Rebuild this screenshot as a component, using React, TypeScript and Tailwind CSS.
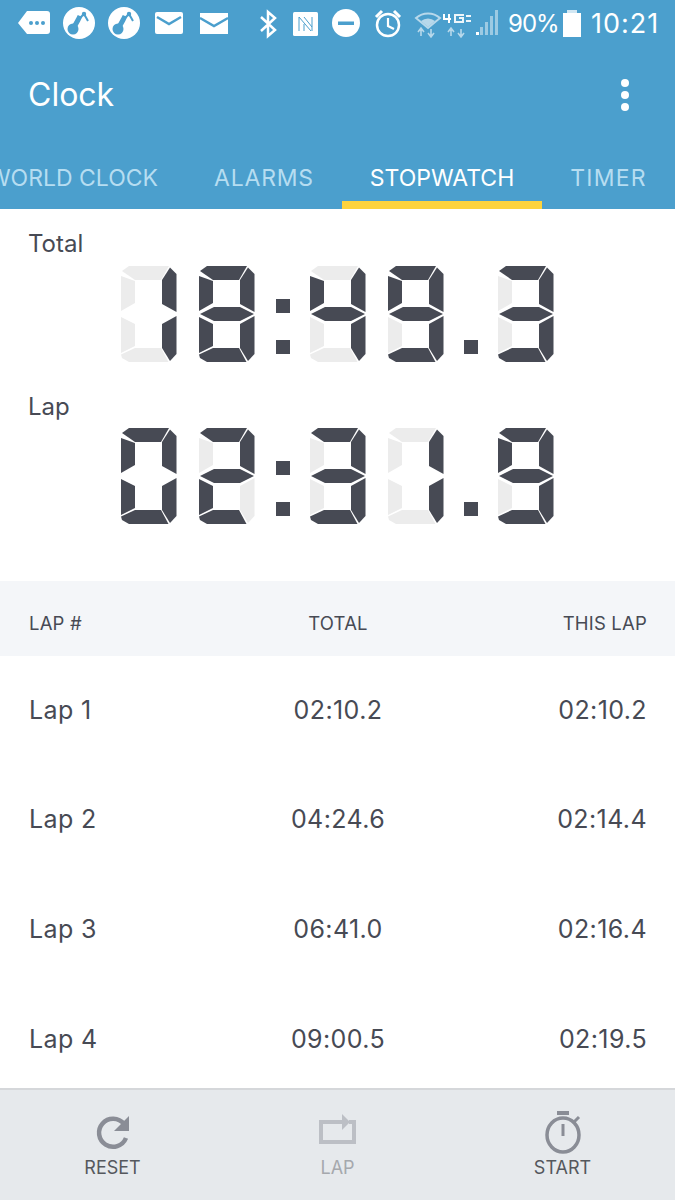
const SEGS: Record<string, string> = {
  a: "1,5 8,0 48,0 40,14 14,14",
  b: "49,1.5 55.5,8 55.5,46 41,38 41,14",
  c: "55.5,50 41,58 41,82 49,95 55.5,88",
  d: "0,88.5 14,82 40,82 47.5,96 8,96 1,92",
  e: "0,51 14,58 14,80 0,87",
  f: "0,10 14,15 14,37 0,45",
  g: "1,48 15,41 41,41 55,48 41,55 15,55",
};
const ON: Record<string, string> = {
  "0": "abcdef", "1": "bc", "2": "abdeg", "3": "abcdg", "4": "bcfg", "8": "abcdefg", "9": "abcdfg",
};

function Digit({ d }: { d: string }) {
  const on = ON[d];
  const hasMid = d !== "0" && d !== "1";
  return (
    <svg width="58" height="98" viewBox="-1 -1 58 98" className="shrink-0">
      {Object.keys(SEGS).map((k) => {
        if (k === "g" && !hasMid) return null;
        return <polygon key={k} points={SEGS[k]} fill={on.includes(k) ? "#474a54" : "#ececec"} />;
      })}
    </svg>
  );
}

function Readout({ v }: { v: string[] }) {
  return (
    <div className="flex h-[98px] pl-[120px]">
      <Digit d={v[0]} />
      <div className="w-[20px]" />
      <Digit d={v[1]} />
      <div className="flex w-[53px] flex-col items-center pt-[34px]">
        <div className="h-[14px] w-[14px] bg-[#474a54]" />
        <div className="mt-[27px] h-[14px] w-[14px] bg-[#474a54]" />
      </div>
      <Digit d={v[2]} />
      <div className="w-[20px]" />
      <Digit d={v[3]} />
      <div className="flex w-[52px] flex-col items-center pt-[75px]">
        <div className="h-[14px] w-[14px] bg-[#474a54]" />
      </div>
      <Digit d={v[4]} />
    </div>
  );
}

function Row({ a, b, c }: { a: string; b: string; c: string }) {
  return (
    <div className="grid h-[109.7px] shrink-0 grid-cols-3 items-center pl-[29px] pr-[28px] text-[25px] tracking-[0.4px] text-[#474a54]">
      <div>{a}</div>
      <div className="text-center">{b}</div>
      <div className="text-right">{c}</div>
    </div>
  );
}

function StatusIcons() {
  return (
    <svg width="675" height="47" viewBox="0 0 675 47" className="block">
      <path d="M18 23 L27 11 H47 a3 3 0 0 1 3 3 V31 a3 3 0 0 1 -3 3 H27 Z" fill="#fff" />
      <circle cx="31" cy="23" r="2" fill="#4b9fcd" />
      <circle cx="37" cy="23" r="2" fill="#4b9fcd" />
      <circle cx="43" cy="23" r="2" fill="#4b9fcd" />
      {[79, 124].map((x) => (
        <g key={x}>
          <circle cx={x} cy="23" r="16" fill="#fff" />
          <circle cx={x - 6} cy="29" r="5.5" fill="#4b9fcd" />
          <path d={`M${x - 6} 29 L${x - 1} 20 L${x + 1} 16`} stroke="#4b9fcd" strokeWidth="5" fill="none" />
          <path d={`M${x + 1} 18 L${x + 5} 14 L${x + 9} 21`} stroke="#4b9fcd" strokeWidth="2" fill="none" />
          <circle cx={x + 5} cy="14" r="2.2" fill="#4b9fcd" />
        </g>
      ))}
      <rect x="155" y="12" width="28" height="22" rx="2" fill="#fff" />
      <path d="M157 17 L169 24 L181 17" stroke="#4b9fcd" strokeWidth="2.5" fill="none" />
      <rect x="200" y="13" width="28" height="21" fill="#fff" />
      <path d="M200 18 L214 26 L228 18" stroke="#4b9fcd" strokeWidth="2.5" fill="none" />
      <path d="M261 17 L275 30 L268 36 V12 L275 18 L261 31" stroke="#fff" strokeWidth="2.5" fill="none" />
      <rect x="293" y="12" width="25" height="24" rx="1.5" fill="#fff" />
      <path d="M299 17 V31 M299 17 L311 31 M304 17 L312 27 M312 17 V31 M304 24 V31" stroke="#4b9fcd" strokeWidth="1" fill="none" />
      <circle cx="346" cy="23" r="14" fill="#fff" />
      <rect x="338" y="21.5" width="16" height="3.5" fill="#4b9fcd" />
      <circle cx="388" cy="25" r="11" stroke="#fff" strokeWidth="2.5" fill="none" />
      <path d="M388 18 V26 L394 29" stroke="#fff" strokeWidth="2.2" fill="none" />
      <path d="M376 17 L382 11 M394 11 L400 17" stroke="#fff" strokeWidth="3" />
      <g opacity="0.6">
        <path d="M416 18 A18 18 0 0 1 440 18 L428 28 Z" fill="none" stroke="#fff" strokeWidth="2" />
        <path d="M421 21 A11 11 0 0 1 435 21 L428 27 Z" fill="#fff" />
        <path d="M421 36 V29 M418 32 L421 28 L424 32 M431 29 V36 M428 33 L431 37 L434 33" stroke="#fff" strokeWidth="1.6" fill="none" />
        <path d="M451 36 V29 M448 32 L451 28 L454 32 M461 29 V36 M458 33 L461 37 L464 33" stroke="#fff" strokeWidth="1.6" fill="none" />
      </g>
      <path d="M444 14 V19 H451 M449 14 V23" stroke="#fff" strokeWidth="2" fill="none" />
      <path d="M464 15 H455 V22 H463 V18 H459" stroke="#fff" strokeWidth="2" fill="none" opacity="0.9" />
      <path d="M466 16 H471 M466 21 H471" stroke="#fff" strokeWidth="2" opacity="0.9" />
      <rect x="476" y="32" width="3" height="3" fill="#fff" />
      <g fill="#fff" opacity="0.45">
        <rect x="480" y="27" width="3" height="8" />
        <rect x="485" y="22" width="3" height="13" />
        <rect x="490" y="16" width="3" height="19" />
        <rect x="495" y="10" width="3" height="25" />
      </g>
      <rect x="567" y="10" width="10" height="3" fill="#fff" opacity="0.75" />
      <rect x="563" y="13" width="18" height="24" fill="#fff" />
    </svg>
  );
}

export default function App() {
  const font = { fontFamily: '"Inter", "Liberation Sans", sans-serif' };
  return (
    <div className="flex h-[1200px] w-[675px] flex-col overflow-hidden bg-white" style={font}>
      <header className="h-[209px] shrink-0 bg-[#4b9fcd] text-white">
        <div className="relative h-[47px]">
          <StatusIcons />
          <span className="absolute left-[508px] top-[6px] text-[24px] leading-[36px] tracking-[-1px]">90%</span>
          <span className="absolute left-[591px] top-[6px] text-[27px] leading-[36px] tracking-[1px]">10:21</span>
        </div>
        <div className="flex h-[96px] items-center justify-between pl-[28px] pr-[46px]">
          <span className="text-[32px] leading-none">Clock</span>
          <span className="flex flex-col gap-[4px]">
            <i className="block h-[8px] w-[8px] rounded-full bg-white" />
            <i className="block h-[8px] w-[8px] rounded-full bg-white" />
            <i className="block h-[8px] w-[8px] rounded-full bg-white" />
          </span>
        </div>
        <nav className="flex h-[66px] justify-end overflow-hidden pt-[4px] text-[23px] text-[#b6ddf1]">
          <div className="flex h-full w-[226px] shrink-0 items-center justify-end pr-[28px] whitespace-nowrap">WORLD CLOCK</div>
          <div className="flex h-full w-[156px] shrink-0 items-center justify-center tracking-[0.8px]">ALARMS</div>
          <div className="relative flex h-full w-[200px] shrink-0 items-center justify-center text-white">
            STOPWATCH
            <span className="absolute bottom-0 left-0 h-[8px] w-full bg-[#fdd33d]" />
          </div>
          <div className="flex h-full w-[133px] shrink-0 items-center justify-center tracking-[1.2px]">TIMER</div>
        </nav>
      </header>

      <section className="h-[372px] shrink-0 text-[#474a54]">
        <div className="mt-[17px] flex h-[35px] items-center pl-[28px] text-[24px]">Total</div>
        <div className="mt-[4px]"><Readout v={["1", "8", "4", "9", "3"]} /></div>
        <div className="mt-[26px] flex h-[35px] items-center pl-[28px] text-[24px]">Lap</div>
        <div className="mt-[3px]"><Readout v={["0", "2", "3", "1", "9"]} /></div>
      </section>

      <div className="grid h-[74.5px] shrink-0 grid-cols-3 items-center bg-[#f4f6f9] pl-[29px] pr-[28px] pt-[12px] text-[18.5px] tracking-[0.2px] text-[#474a54]">
        <div>LAP #</div>
        <div className="text-center">TOTAL</div>
        <div className="text-right">THIS LAP</div>
      </div>

      <div className="flex min-h-0 flex-1 flex-col overflow-hidden">
        <Row a="Lap 1" b="02:10.2" c="02:10.2" />
        <Row a="Lap 2" b="04:24.6" c="02:14.4" />
        <Row a="Lap 3" b="06:41.0" c="02:16.4" />
        <Row a="Lap 4" b="09:00.5" c="02:19.5" />
      </div>

      <footer className="grid h-[112px] shrink-0 grid-cols-3 border-t-2 border-[#d5d7da] bg-[#e6e9ec] text-[18px]">
        <div className="flex flex-col items-center text-[#55585d]">
          <svg width="40" height="44" viewBox="0 0 40 44" className="mt-[20px]">
            <path d="M31 14 A14 14 0 1 0 33 28" fill="none" stroke="#8a8d96" strokeWidth="4.5" />
            <path d="M36 6 V21 H21 Z" fill="#8a8d96" />
          </svg>
          <span className="mt-[2px] leading-[24px]">RESET</span>
        </div>
        <div className="flex flex-col items-center text-[#a5a8ad]">
          <svg width="40" height="44" viewBox="0 0 40 44" className="mt-[20px]">
            <path d="M17 12 H3 V32 H36 V12 H31" fill="none" stroke="#bcbfc5" strokeWidth="4" />
            <path d="M17 12 H24" stroke="#bcbfc5" strokeWidth="4" />
            <path d="M24 4 L32 12 L24 20 Z" fill="#bcbfc5" />
          </svg>
          <span className="mt-[2px] leading-[24px]">LAP</span>
        </div>
        <div className="flex flex-col items-center text-[#55585d]">
          <svg width="40" height="44" viewBox="0 0 40 44" className="mt-[20px]">
            <rect x="14" y="1" width="12" height="4" fill="#8a8d96" />
            <ellipse cx="20" cy="25" rx="16" ry="17" fill="none" stroke="#8a8d96" strokeWidth="3.5" />
            <rect x="18.5" y="14" width="3" height="12" fill="#8a8d96" />
            <path d="M31 12 L36 7" stroke="#8a8d96" strokeWidth="3" />
          </svg>
          <span className="mt-[2px] leading-[24px]">START</span>
        </div>
      </footer>
    </div>
  );
}
